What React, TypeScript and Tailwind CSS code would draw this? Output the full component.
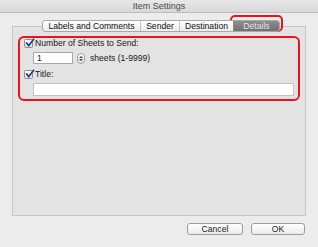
import React from "react";

function CheckBox() {
  return (
    <div className="relative w-[9px] h-[9px] shrink-0 rounded-[1.5px] border border-[#8f8f8f] bg-gradient-to-b from-white to-[#dcdcdc]">
      <svg className="absolute left-[0px] top-[-2px]" width="10" height="10" viewBox="0 0 10 10">
        <path d="M1.6 5 L3.8 7.6 L8.6 1.2" fill="none" stroke="#1f3f86" strokeWidth="1.7" strokeLinecap="round" strokeLinejoin="round" />
      </svg>
    </div>
  );
}

export default function App() {
  const font = { fontFamily: '"Liberation Sans", Arial, sans-serif' };
  return (
    <div
      className="relative w-[318px] h-[247px] overflow-hidden bg-[#ececec] text-[#1a1a1a] flex flex-col"
      style={font}
    >
      {/* title bar */}
      <div className="h-[13px] shrink-0 flex items-center justify-center bg-gradient-to-b from-[#e8e8e8] to-[#d8d8d8] border-b border-[#bcbcbc] text-[9px] text-[#4a4a4a] leading-none">
        Item Settings
      </div>

      <div className="px-[12px] flex flex-col">
        {/* tabs */}
        <div className="relative z-10 mt-[7px] h-[12px] pl-[30px] flex">
          <div className="flex h-[12px] rounded-[3px] border border-[#a9a9a9] bg-gradient-to-b from-white to-[#ececec] overflow-hidden text-[8.6px] leading-none text-[#111]">
            <div className="w-[97px] flex items-center justify-center">Labels and Comments</div>
            <div className="w-[39px] flex items-center justify-center border-l border-[#c2c2c2]">Sender</div>
            <div className="w-[54px] flex items-center justify-center border-l border-[#c2c2c2]">Destination</div>
            <div className="w-[46px] flex items-center justify-center border-l border-[#8a8a8a] bg-gradient-to-b from-[#8e8e8e] to-[#707070] text-[#e4e4e4]">
              Details
            </div>
          </div>
        </div>

        {/* panel */}
        <div className="-mt-[6px] h-[190px] border border-[#c6c6c6] bg-[#e3e3e3] pt-[9px] pl-[5px]">
          <div className="w-[282px] h-[65px] border-2 border-[#e8141c] rounded-[6px] pl-[4px] pt-0 flex flex-col text-[8.6px] leading-none">
            <div className="flex items-center gap-[2px] h-[10px] mt-[0px]">
              <CheckBox />
              <span>Number of Sheets to Send:</span>
            </div>
            <div className="flex items-center mt-[4px] ml-[9px] h-[12px]">
              <div className="w-[40px] h-[12px] border border-[#a8a8a8] bg-white flex items-center pl-[3px]">1</div>
              <div className="ml-[4px] w-[8px] h-[11px] rounded-full border border-[#a0a0a0] bg-gradient-to-b from-white to-[#e0e0e0] flex flex-col items-center justify-center gap-[1px]">
                <div className="w-0 h-0 border-l-[2px] border-r-[2px] border-b-[2px] border-l-transparent border-r-transparent border-b-[#444]" />
                <div className="w-0 h-0 border-l-[2px] border-r-[2px] border-t-[2px] border-l-transparent border-r-transparent border-t-[#444]" />
              </div>
              <span className="ml-[5px]">sheets (1-9999)</span>
            </div>
            <div className="flex items-center gap-[2px] h-[10px] mt-[5px]">
              <CheckBox />
              <span>Title:</span>
            </div>
            <div className="mt-[4px] ml-[9px] w-[261px] h-[13px] border border-[#c2c2c2] bg-white" />
          </div>
        </div>

        {/* buttons */}
        <div className="mt-[7px] flex justify-end gap-[8px] pr-[1px]">
          <div className="w-[56px] h-[12px] rounded-[3px] border border-[#9c9c9c] bg-gradient-to-b from-white to-[#ebebeb] flex items-center justify-center text-[8.6px] leading-none">
            Cancel
          </div>
          <div className="w-[54px] h-[12px] rounded-[3px] border border-[#9c9c9c] bg-gradient-to-b from-white to-[#ebebeb] flex items-center justify-center text-[8.6px] leading-none">
            OK
          </div>
        </div>
      </div>

      {/* annotation around Details tab */}
      <div className="absolute left-[230px] top-[15px] w-[53px] h-[17px] border-2 border-[#e8141c] rounded-[5px]" />
    </div>
  );
}
